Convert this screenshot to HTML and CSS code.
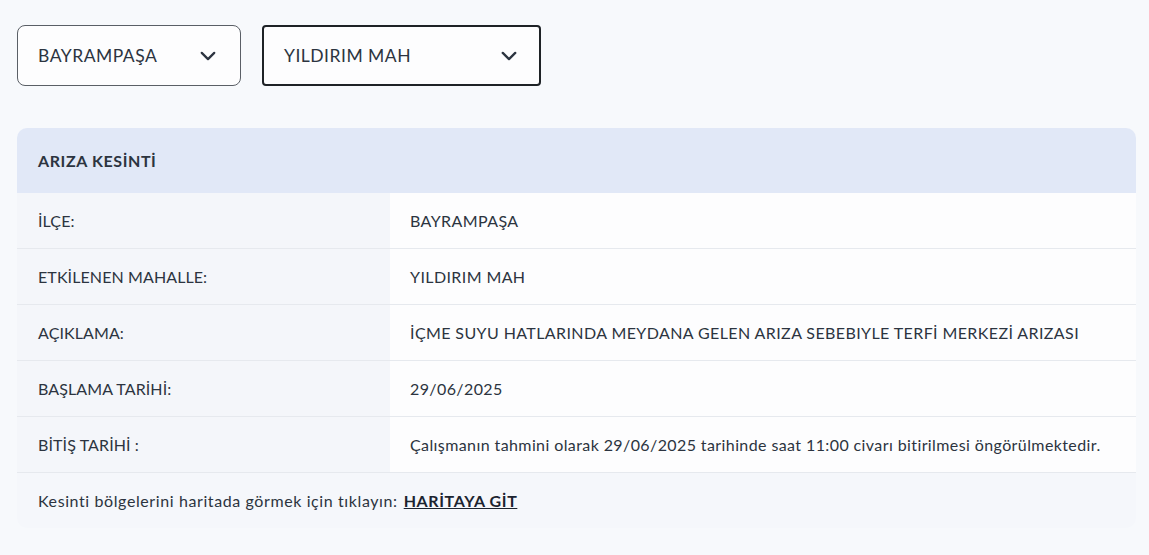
FILE: index.html
```html
<!DOCTYPE html>
<html lang="tr">
<head>
    <meta charset="UTF-8">
    <meta name="viewport" content="width=device-width, initial-scale=1.0">
    <title>Arıza Kesinti</title>
    <link rel="stylesheet" href="styles.css">
</head>
<body>
    <div class="filters">
        <div class="select">
            <span>BAYRAMPAŞA</span>
            <svg class="chevron" viewBox="0 0 16 16"><path d="M3 5.5l5 5 5-5"/></svg>
        </div>
        <div class="select select-active">
            <span>YILDIRIM MAH</span>
            <svg class="chevron" viewBox="0 0 16 16"><path d="M3 5.5l5 5 5-5"/></svg>
        </div>
    </div>

    <section class="outage">
        <div class="outage-head">ARIZA KESİNTİ</div>
        <table class="outage-table">
            <tr><th>İLÇE:</th><td>BAYRAMPAŞA</td></tr>
            <tr><th>ETKİLENEN MAHALLE:</th><td>YILDIRIM MAH</td></tr>
            <tr><th>AÇIKLAMA:</th><td>İÇME SUYU HATLARINDA MEYDANA GELEN ARIZA SEBEBIYLE TERFİ MERKEZİ ARIZASI</td></tr>
            <tr><th>BAŞLAMA TARİHİ:</th><td>29/06/2025</td></tr>
            <tr><th>BİTİŞ TARİHİ :</th><td>Çalışmanın tahmini olarak 29/06/2025 tarihinde saat 11:00 civarı bitirilmesi öngörülmektedir.</td></tr>
        </table>
        <div class="outage-foot">
            Kesinti bölgelerini haritada görmek için tıklayın: <a href="#">HARİTAYA GİT</a>
        </div>
    </section>
</body>
</html>
```

FILE: styles.css
```css
body {
    font-family: "Lato", "Noto Sans", sans-serif;
    margin: 0;
    padding: 25px 13px 0 17px;
    background-color: #f7f9fc;
    color: #2c3440;
}

.filters {
    display: flex;
    gap: 21px;
    margin-bottom: 42px;
}

.select {
    box-sizing: border-box;
    width: 224px;
    height: 61px;
    padding: 0 22px 0 20px;
    border: 1px solid #5a5f66;
    border-radius: 8px;
    background-color: #fdfdfe;
    display: flex;
    align-items: center;
    justify-content: space-between;
    font-size: 17.5px;
    letter-spacing: 0.5px;
}

.select-active {
    width: 279px;
    border: 2px solid #1e2226;
    border-radius: 4px;
    padding: 0 20px 0 20px;
}

.chevron {
    width: 20px;
    height: 20px;
    fill: none;
    stroke: #2c3440;
    stroke-width: 1.8;
    stroke-linecap: round;
    stroke-linejoin: round;
}

.outage {
    border-radius: 10px;
    overflow: hidden;
    background-color: #f5f7fb;
}

.outage-head {
    height: 65px;
    padding-left: 21px;
    display: flex;
    align-items: center;
    background-color: #e1e8f7;
    font-size: 16px;
    font-weight: 700;
    letter-spacing: 0.6px;
}

.outage-table {
    width: 100%;
    border-collapse: collapse;
    font-size: 16px;
    letter-spacing: 0.4px;
}

.outage-table th,
.outage-table td {
    height: 55px;
    padding: 0 20px;
    text-align: left;
    font-weight: 400;
    border-bottom: 1px solid #e6e9ee;
}

.outage-table th {
    width: 332px;
    padding-left: 21px;
    background-color: #f4f6fa;
    letter-spacing: 0.1px;
}

.outage-table td {
    background-color: #fdfdfe;
}

.outage-foot {
    height: 55px;
    padding-left: 21px;
    display: flex;
    align-items: center;
    font-size: 16px;
    letter-spacing: 0.6px;
}

.outage-foot a {
    margin-left: 6px;
    color: #1c2430;
    font-weight: 700;
}
```
